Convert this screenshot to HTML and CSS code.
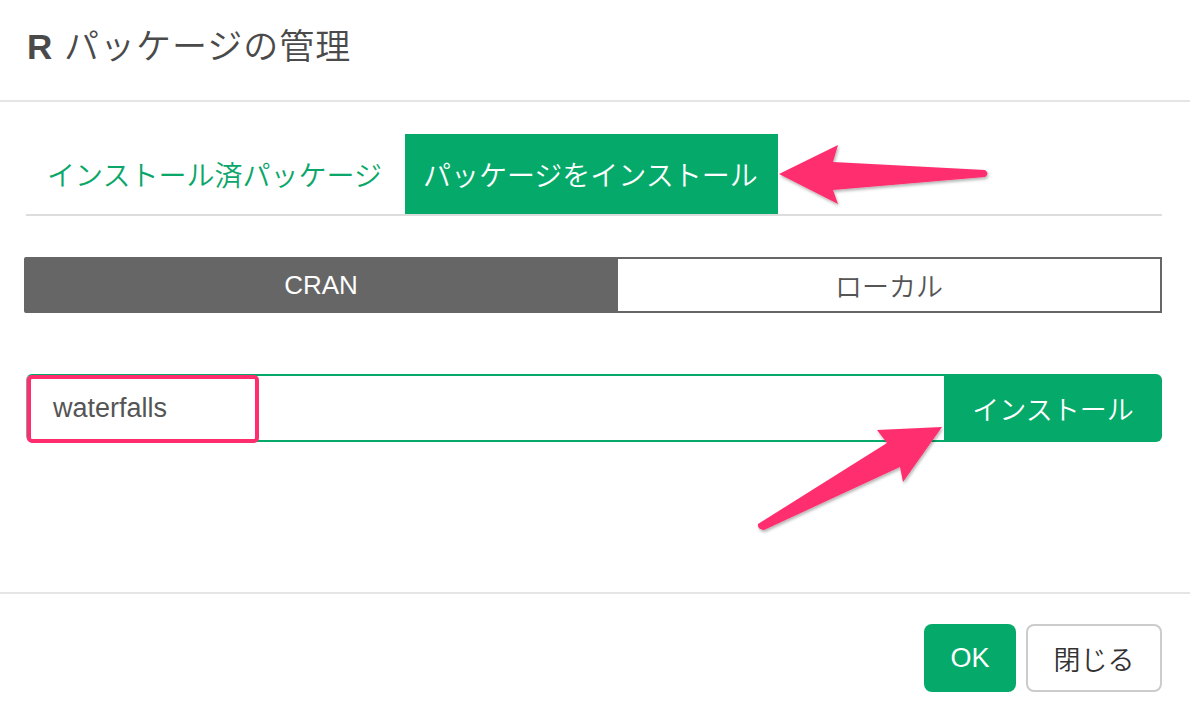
FILE: index.html
```html
<!DOCTYPE html>
<html lang="ja">
<head>
<meta charset="utf-8">
<title>R パッケージの管理</title>
<link rel="stylesheet" href="styles.css">
</head>
<body>
<div class="modal">
  <div class="modal-header">
    <h1 class="modal-title"><b>R</b> パッケージの管理</h1>
  </div>
  <div class="modal-body">
    <div class="tabs">
      <div class="tab">インストール済パッケージ</div>
      <div class="tab active">パッケージをインストール</div>
    </div>
    <div class="segment">
      <div class="seg seg-on">CRAN</div>
      <div class="seg seg-off">ローカル</div>
    </div>
    <div class="input-group">
      <div class="input">waterfalls</div>
      <div class="install-btn">インストール</div>
    </div>
  </div>
  <div class="modal-footer">
    <div class="btn btn-ok">OK</div>
    <div class="btn btn-close">閉じる</div>
  </div>
  <svg class="annot" width="1190" height="712" viewBox="0 0 1190 712">
    <defs>
      <filter id="sh" x="-10%" y="-20%" width="130%" height="150%">
        <feDropShadow dx="1" dy="2" stdDeviation="1.5" flood-color="#000" flood-opacity="0.3"/>
      </filter>
    </defs>
    <rect x="29" y="377" width="228" height="64" rx="3" fill="none" stroke="#ff2d6e" stroke-width="4"/>
    <path filter="url(#sh)" fill="#ff2d6e" d="M779 174 L838 145 L833 162 L985 170 Q990 173.5 985 177 L833 190 L838 204 Z"/>
    <path filter="url(#sh)" fill="#ff2d6e" d="M942 427 L903 482 L900 467 L764 530 Q757 529 758 524 L887 443 L877 430 Z"/>
  </svg>
</div>
</body>
</html>
```

FILE: styles.css
```css
html, body {
  margin: 0;
  padding: 0;
  background: #fff;
}
body {
  font-family: "Liberation Sans", "Noto Sans CJK JP", sans-serif;
  font-weight: 350;
  color: #4d4d4d;
}
.modal {
  position: relative;
  width: 1190px;
  height: 712px;
  overflow: hidden;
}
.modal-header {
  height: 102px;
  box-sizing: border-box;
  padding: 26px 0 0 27px;
  border-bottom: 2px solid #e5e5e5;
}
.modal-title {
  margin: 0;
  font-size: 35px;
  font-weight: 350;
  line-height: 42px;
  letter-spacing: 1px;
  color: #4a4a4a;
}
.modal-title b {
  font-weight: bold;
}
.modal-body {
  padding: 32px 28px 150px 26px;
}
.tabs {
  display: flex;
  height: 80px;
  border-bottom: 2px solid #dddddd;
}
.tab {
  display: flex;
  align-items: center;
  padding: 0 20px 0 21px;
  margin-right: 3px;
  font-size: 28px;
  color: #0aa66a;
}
.tab.active {
  background: #05aa6b;
  color: #fff;
  padding: 0 20px 0 18px;
}
.segment {
  display: grid;
  grid-template-columns: 594px 1fr;
  height: 56px;
  margin: 41px 0 0 -2px;
}
.seg {
  display: flex;
  align-items: center;
  justify-content: center;
  font-size: 26px;
}
.seg-on {
  background: #666666;
  color: #fff;
  border-radius: 2px 0 0 2px;
}
.seg-off {
  border: 2px solid #666666;
  border-left: none;
  color: #555;
  font-size: 27px;
}
.input-group {
  display: flex;
  height: 68px;
  margin-top: 61px;
}
.input {
  flex: 1;
  display: flex;
  align-items: center;
  padding-left: 25px;
  border: 2px solid #05aa6b;
  border-left: 2px solid #999;
  border-right: none;
  border-radius: 6px 0 0 6px;
  font-size: 27px;
  color: #555;
}
.install-btn {
  width: 218px;
  display: flex;
  align-items: center;
  justify-content: center;
  background: #05aa6b;
  color: #fff;
  font-size: 27px;
  border-radius: 0 6px 6px 0;
}
.modal-footer {
  display: flex;
  justify-content: flex-end;
  gap: 10px;
  padding: 30px 28px 0 0;
  border-top: 2px solid #e5e5e5;
}
.btn {
  height: 68px;
  box-sizing: border-box;
  display: flex;
  align-items: center;
  justify-content: center;
  border-radius: 8px;
  font-size: 27px;
}
.btn-ok {
  width: 92px;
  background: #05aa6b;
  color: #fff;
}
.btn-close {
  width: 136px;
  border: 2px solid #cccccc;
  color: #333;
  background: #fff;
}
.annot {
  position: absolute;
  left: 0;
  top: 0;
  pointer-events: none;
}
```
